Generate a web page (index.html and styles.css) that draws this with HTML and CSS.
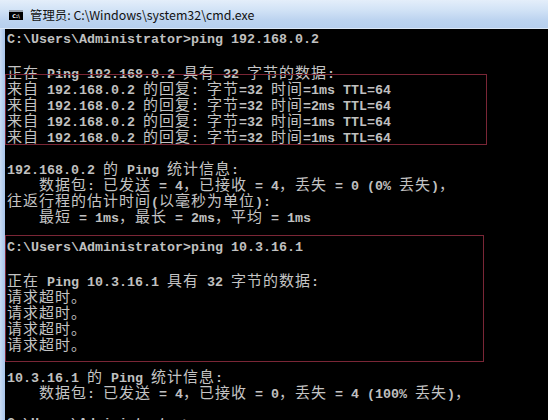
FILE: index.html
```html
<!DOCTYPE html>
<html lang="zh-CN">
<head>
<meta charset="utf-8">
<link rel="stylesheet" href="styles.css">
</head>
<body>
<div class="window">
  <div class="titlebar">
    <div class="app-icon"><span>C:\</span></div>
    <div class="title">管理员: C:\Windows\system32\cmd.exe</div>
  </div>
  <div class="main">
    <div class="frame-left"></div>
    <div class="console">
      <div class="ln">C:\Users\Administrator&gt;ping 192.168.0.2</div>
      <div class="ln"></div>
      <div class="ln"><span class="c">正在</span> Ping 192.168.0.2 <span class="c">具有</span> 32 <span class="c">字节的数据</span>:</div>
      <div class="ln"><span class="c">来自</span> 192.168.0.2 <span class="c">的回复</span>: <span class="c">字节</span>=32 <span class="c">时间</span>=1ms TTL=64</div>
      <div class="ln"><span class="c">来自</span> 192.168.0.2 <span class="c">的回复</span>: <span class="c">字节</span>=32 <span class="c">时间</span>=2ms TTL=64</div>
      <div class="ln"><span class="c">来自</span> 192.168.0.2 <span class="c">的回复</span>: <span class="c">字节</span>=32 <span class="c">时间</span>=1ms TTL=64</div>
      <div class="ln"><span class="c">来自</span> 192.168.0.2 <span class="c">的回复</span>: <span class="c">字节</span>=32 <span class="c">时间</span>=1ms TTL=64</div>
      <div class="ln"></div>
      <div class="ln">192.168.0.2 <span class="c">的</span> Ping <span class="c">统计信息</span>:</div>
      <div class="ln">    <span class="c">数据包</span>: <span class="c">已发送</span> = 4<span class="c">，已接收</span> = 4<span class="c">，丢失</span> = 0 (0% <span class="c">丢失</span>)<span class="c">，</span></div>
      <div class="ln"><span class="c">往返行程的估计时间</span>(<span class="c">以毫秒为单位</span>):</div>
      <div class="ln">    <span class="c">最短</span> = 1ms<span class="c">，最长</span> = 2ms<span class="c">，平均</span> = 1ms</div>
      <div class="ln"></div>
      <div class="ln">C:\Users\Administrator&gt;ping 10.3.16.1</div>
      <div class="ln"></div>
      <div class="ln"><span class="c">正在</span> Ping 10.3.16.1 <span class="c">具有</span> 32 <span class="c">字节的数据</span>:</div>
      <div class="ln"><span class="c">请求超时。</span></div>
      <div class="ln"><span class="c">请求超时。</span></div>
      <div class="ln"><span class="c">请求超时。</span></div>
      <div class="ln"><span class="c">请求超时。</span></div>
      <div class="ln"></div>
      <div class="ln">10.3.16.1 <span class="c">的</span> Ping <span class="c">统计信息</span>:</div>
      <div class="ln">    <span class="c">数据包</span>: <span class="c">已发送</span> = 4<span class="c">，已接收</span> = 0<span class="c">，丢失</span> = 4 (100% <span class="c">丢失</span>)<span class="c">，</span></div>
      <div class="ln"></div>
      <div class="ln">C:\Users\Administrator&gt;</div>
      <div class="mark mark-1"></div>
      <div class="mark mark-2"></div>
    </div>
  </div>
</div>
</body>
</html>
```
FILE: styles.css
```css
html, body {
  margin: 0;
  padding: 0;
  background: #000;
}
.window {
  width: 548px;
  height: 420px;
  display: flex;
  flex-direction: column;
  overflow: hidden;
}
.titlebar {
  height: 29px;
  flex: none;
  display: flex;
  align-items: center;
  gap: 7px;
  padding-left: 9px;
  background: linear-gradient(180deg, #e4eefa 0%, #d2e3f6 35%, #bdd4f0 70%, #b6cfee 100%);
  border-bottom: 1px solid #dbe8f7;
  box-sizing: border-box;
}
.app-icon {
  width: 14px;
  height: 10px;
  background: #000;
  border-top: 2px solid #9aa4b0;
  box-sizing: border-box;
  display: flex;
  align-items: center;
  justify-content: center;
  margin-top: 1px;
}
.app-icon span {
  color: #fff;
  font-family: "DejaVu Sans", sans-serif;
  font-size: 5px;
  font-weight: bold;
  line-height: 6px;
}
.title {
  font-family: "Noto Sans CJK SC", "Noto Sans", sans-serif;
  font-size: 12.4px;
  color: #111;
  line-height: 16px;
  margin-top: 1px;
}
.main {
  flex: 1;
  display: flex;
  min-height: 0;
}
.frame-left {
  width: 5px;
  flex: none;
  background: linear-gradient(90deg, #c9dcf4, #a7c4ea);
}
.console {
  flex: 1;
  position: relative;
  background: #000;
  padding: 3px 0 0 2px;
  overflow: hidden;
  color: #c0c0c0;
  font-family: "Liberation Mono", "DejaVu Sans Mono", monospace;
  font-size: 13.33px;
  font-weight: bold;
}
.ln {
  height: 16px;
  line-height: 16px;
  white-space: pre;
}
.c {
  font-family: "Noto Sans CJK SC", sans-serif;
  font-weight: normal;
  font-size: 15px;
  letter-spacing: 1px;
  line-height: 16px;
  color: #c4c4c4;
}
.mark {
  position: absolute;
  left: 0;
  border: 1px solid #7a2636;
  box-sizing: border-box;
}
.mark-1 {
  top: 45px;
  width: 482px;
  height: 71px;
}
.mark-2 {
  top: 206px;
  width: 479px;
  height: 127px;
}
```
